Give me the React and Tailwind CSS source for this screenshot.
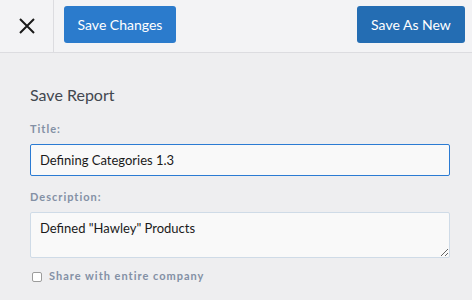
import React from "react";

const Header = () => (
  <div className="flex h-[53px] items-stretch border-b border-[#dcdce0] bg-[#f3f3f5]">
    <div className="flex w-[54px] items-center justify-center border-r border-[#dcdce0]">
      <svg width="16" height="16" viewBox="0 0 16 16">
        <path d="M1 1L15 15M15 1L1 15" stroke="#1a1a1a" strokeWidth="2" />
      </svg>
    </div>
    <div className="flex flex-1 items-start justify-between pl-[10px] pr-[7px] pt-[6px]">
      <button className="h-[37px] w-[112px] rounded-[3px] bg-[#2b7bcc] text-[14px] text-white">
        Save Changes
      </button>
      <button className="h-[37px] w-[108px] rounded-[3px] bg-[#246db3] text-[14px] text-white">
        Save As New
      </button>
    </div>
  </div>
);

export default function App() {
  return (
    <div
      className="h-[300px] w-[472px] overflow-hidden bg-[#eeeef0]"
      style={{ fontFamily: "Lato, 'Open Sans', sans-serif" }}
    >
      <Header />
      <div className="px-[30px] pt-[32px]">
        <h2 className="text-[16px] leading-[20px] text-[#42474f]">Save Report</h2>
        <label className="mt-[16px] block text-[11px] font-bold leading-[15px] tracking-[1px] text-[#8390a5]">
          Title:
        </label>
        <input
          readOnly
          value="Defining Categories 1.3"
          className="mt-[8px] block h-[32px] w-[420px] rounded-[2px] border border-[#2b7bd3] bg-[#f9f9f9] px-[9px] text-[13px] text-[#1a1a1a] outline-none"
        />
        <label className="mt-[13px] block text-[11px] font-bold leading-[15px] tracking-[1px] text-[#8390a5]">
          Description:
        </label>
        <textarea
          readOnly
          value={'Defined "Hawley" Products'}
          className="mt-[8px] block h-[46px] w-[420px] rounded-[2px] border border-[#cfdbe7] bg-[#f9f9f9] px-[9px] pt-[7px] text-[13px] leading-[16px] text-[#1a1a1a] outline-none"
        />
        <div className="mt-[10px] flex items-center gap-[7px]">
          <span className="ml-[2px] mt-[2px] block h-[10px] w-[10px] rounded-[2px] border border-[#9c9c9c] bg-white" />
          <span className="text-[11px] font-bold leading-[15px] tracking-[1px] text-[#8390a5]">
            Share with entire company
          </span>
        </div>
      </div>
    </div>
  );
}
